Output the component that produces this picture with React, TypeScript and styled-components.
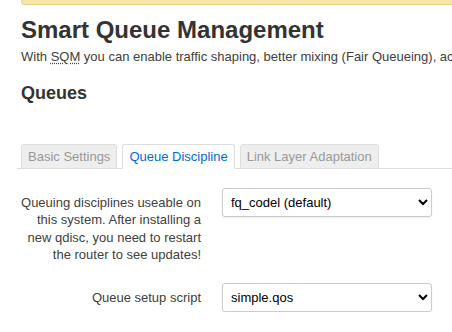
import React from "react";
import styled, { createGlobalStyle } from "styled-components";

const Global = createGlobalStyle`
  html, body { margin: 0; padding: 0; background: #fff; }
  body { font-family: "Liberation Sans", Arial, sans-serif; color: #404040; font-size: 13px; overflow: hidden; }
`;

const Page = styled.div`
  padding-left: 21px;
  width: 452px;
  box-sizing: border-box;
  overflow: hidden;
`;

const Banner = styled.div`
  height: 4px;
  margin-right: -20px;
  background: #f6e7a6;
  border: 1px solid #e4d187;
  border-top: none;
  border-radius: 0 0 0 4px;
`;

const Title = styled.h2`
  margin: 12px 0 0 0;
  font-size: 24px;
  line-height: 26px;
  font-weight: bold;
  color: #333;
  white-space: nowrap;
`;

const Intro = styled.p`
  margin: 5px 0 0 0;
  font-size: 13px;
  line-height: 18px;
  color: #404040;
  white-space: nowrap;
`;

const Abbr = styled.abbr`
  text-decoration: underline dotted;
  text-underline-offset: 2px;
  cursor: help;
`;

const Section = styled.h3`
  margin: 16px 0 0 0;
  font-size: 18px;
  line-height: 22px;
  font-weight: bold;
  color: #333;
`;

const TabBar = styled.ul`
  list-style: none;
  display: flex;
  gap: 5px;
  margin: 40px 0 0 -4px;
  padding: 0 0 0 4px;
  border-bottom: 1px solid #ddd;
`;

const Tab = styled.li<{ $active?: boolean }>`
  margin-bottom: -1px;
  padding: 0 6px;
  height: 25px;
  line-height: 24px;
  font-size: 13px;
  border: 1px solid #ddd;
  border-bottom-color: ${(p) => (p.$active ? "#fff" : "#ddd")};
  border-radius: 3px 3px 0 0;
  background: ${(p) => (p.$active ? "#fff" : "#eee")};
  color: ${(p) => (p.$active ? "#0069d6" : "#999")};
  box-sizing: border-box;
  white-space: nowrap;
`;

const Form = styled.div`
  margin-top: 19px;
  display: flex;
  flex-direction: column;
  gap: 20px;
`;

const Row = styled.div`
  display: flex;
  align-items: flex-start;
  gap: 21px;
`;

const Label = styled.label`
  width: 180px;
  padding-top: 6px;
  text-align: right;
  font-size: 13px;
  line-height: 17.3px;
  color: #404040;
`;

const Select = styled.select`
  width: 210px;
  height: 29px;
  padding: 0 4px;
  font-family: "Liberation Sans", Arial, sans-serif;
  font-size: 13px;
  color: #000;
  background: #fff;
  border: 1px solid #ccc;
  border-radius: 3px;
  box-shadow: 0 1px 2px rgba(0, 0, 0, 0.08);
`;

export default function App() {
  return (
    <Page>
      <Global />
      <Banner />
      <Title>Smart Queue Management</Title>
      <Intro>
        With <Abbr title="Smart Queue Management">SQM</Abbr> you can enable traffic shaping, better mixing (Fair Queueing), active queue length management (AQM) and prioritisation on one network interface.
      </Intro>
      <Section>Queues</Section>
      <TabBar>
        <Tab>Basic Settings</Tab>
        <Tab $active>Queue Discipline</Tab>
        <Tab>Link Layer Adaptation</Tab>
      </TabBar>
      <Form>
        <Row>
          <Label>
            Queuing disciplines useable on this system. After installing a new qdisc, you need to restart the router to see updates!
          </Label>
          <Select defaultValue="fq_codel">
            <option value="fq_codel">fq_codel (default)</option>
            <option value="cake">cake</option>
          </Select>
        </Row>
        <Row>
          <Label>Queue setup script</Label>
          <Select defaultValue="simple.qos">
            <option value="simple.qos">simple.qos</option>
            <option value="piece_of_cake.qos">piece_of_cake.qos</option>
          </Select>
        </Row>
      </Form>
    </Page>
  );
}
